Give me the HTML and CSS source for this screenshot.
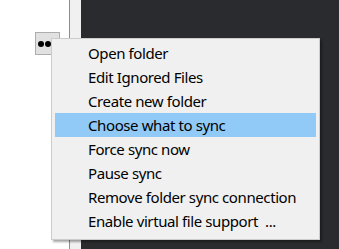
FILE: index.html
```html
<!DOCTYPE html>
<html>
<head>
<meta charset="utf-8">
<link rel="stylesheet" href="styles.css">
</head>
<body>
<div class="layout">
  <div class="panel">
    <div class="btn-row">
      <div class="dots-btn"><span class="dot"></span><span class="dot"></span></div>
    </div>
  </div>
  <div class="strip"></div>
  <div class="dark"></div>
</div>
<div class="menu">
  <div class="item">Open folder</div>
  <div class="item">Edit Ignored Files</div>
  <div class="item">Create new folder</div>
  <div class="item active">Choose what to sync</div>
  <div class="item">Force sync now</div>
  <div class="item">Pause sync</div>
  <div class="item">Remove folder sync connection</div>
  <div class="item">Enable virtual file support&nbsp; ...</div>
</div>
</body>
</html>
```
FILE: styles.css
```css
html, body {
  margin: 0;
  padding: 0;
  width: 339px;
  height: 249px;
  overflow: hidden;
  font-family: "Noto Sans", "Open Sans", sans-serif;
}
.layout {
  display: flex;
  height: 249px;
}
.panel {
  width: 69px;
  background: #ffffff;
  border-right: 1px solid #8c8c92;
}
.btn-row {
  display: flex;
  justify-content: flex-end;
  padding: 32px 9px 0 0;
}
.dots-btn {
  width: 25px;
  height: 23px;
  background: #e1e1e1;
  border: 1px solid #adadad;
  display: flex;
  align-items: center;
  padding-left: 2px;
  gap: 1px;
  box-sizing: border-box;
}
.dot {
  width: 6px;
  height: 6px;
  border-radius: 50%;
  background: #000;
}
.strip {
  width: 11px;
  background: #f0f0f0;
}
.dark {
  flex: 1;
  background: #2a2b2f;
}
.menu {
  position: absolute;
  left: 51px;
  top: 38px;
  width: 261px;
  height: 196px;
  background: #f0f0f0;
  border: 1px solid #cccccc;
  box-shadow: 2px 2px 2px rgba(0, 0, 0, 0.35);
  padding: 2px 3px;
  display: flex;
  flex-direction: column;
}
.item {
  height: 24px;
  line-height: 24px;
  padding-left: 33px;
  font-size: 15px;
  letter-spacing: -0.4px;
  color: #000;
  white-space: nowrap;
}
.item.active {
  background: #91c9f7;
}
```
